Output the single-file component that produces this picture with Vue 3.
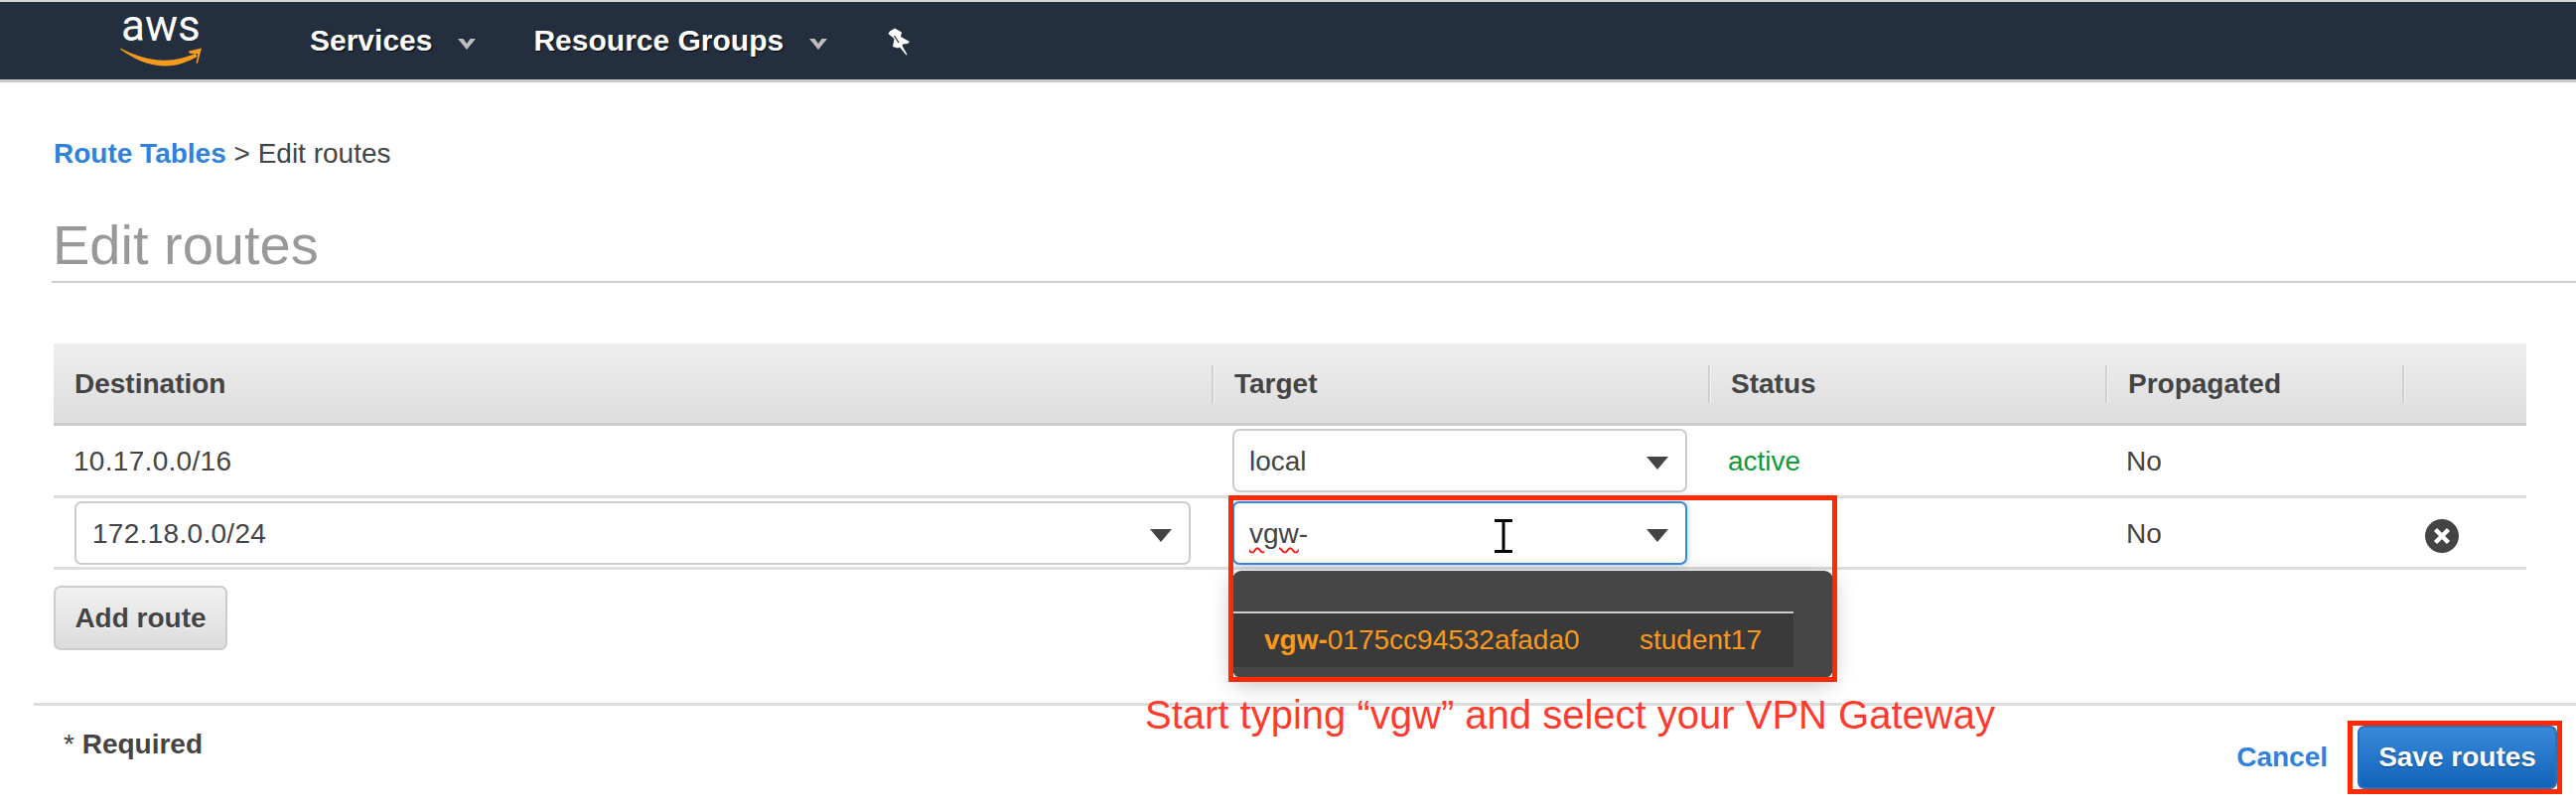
<script setup>
const heads = ['Destination', 'Target', 'Status', 'Propagated', '']
</script>

<template>
  <div class="page">
    <header class="nav">
      <div class="logo">
        <span class="aws">aws</span>
        <svg class="smile" viewBox="0 0 84 20" width="84" height="20">
          <path d="M1 1.500C14 11 29 18 45 18.500C58 18.800 69 14.500 78.500 9L77 5.800C67 10 57 12.800 45 12.700C30 12.500 15 8 1.600 0.500Z" fill="#f79a1c"/>
          <path d="M70 3.500L83 0.500L79 15.500C78 16 77.500 15.500 77.500 15C78.500 12 79 9 79 6C76 6.100 73 6.300 70.500 5.500Z" fill="#f79a1c"/>
        </svg>
      </div>
      <nav class="menu">
        <span class="item">Services<svg class="chev" viewBox="0 0 18 11" width="18" height="11"><path d="M0 0H5.500L9 5L12.500 0H18L9 11Z" fill="#bdbdbd"/></svg></span>
        <span class="item">Resource Groups<svg class="chev" viewBox="0 0 18 11" width="18" height="11"><path d="M0 0H5.500L9 5L12.500 0H18L9 11Z" fill="#bdbdbd"/></svg></span>
        <svg class="pin" viewBox="0 0 24 28" width="24" height="28">
          <path d="M7 0.500L14 4.500L13 9L22 14L20 16L15 16.500L14.500 18L19.500 27L18.500 27.500L12 19.500L10 20.500L5 19L6.500 11L0.500 6L2 3.500Z" fill="#fff"/>
          <path d="M6.500 8L11 15" stroke="#232f3e" stroke-width="1.300"/>
        </svg>
      </nav>
    </header>

    <section class="title">
      <div class="crumb"><a class="link">Route Tables</a> &gt; Edit routes</div>
      <h1 class="heading">Edit routes</h1>
    </section>

    <section class="table">
      <div class="thead">
        <div v-for="(h, i) in heads" :key="i" class="th" :class="{ 'th-first': i === 0 }">{{ h }}</div>
      </div>
      <div class="row row-one">
        <div class="cell first ip">10.17.0.0/16</div>
        <div class="cell">
          <div class="select target"><span>local</span><i class="caret"></i></div>
        </div>
        <div class="cell status"><span class="active">active</span></div>
        <div class="cell prop">No</div>
        <div class="cell"></div>
      </div>
      <div class="row row-two">
        <div class="cell">
          <div class="select dest"><span class="ip">172.18.0.0/24</span><i class="caret small"></i></div>
        </div>
        <div class="cell menu-anchor">
          <div class="select target focus">
            <span class="typed"><span class="wavy">vgw</span>-</span><i class="caret"></i>
            <svg class="ibeam" viewBox="0 0 20 34" width="20" height="34">
              <path d="M1 1.500H19M1 32.500H19M10 1.500V32.500" stroke="#000" stroke-width="3" fill="none"/>
            </svg>
          </div>
          <div class="dropdown">
            <div class="option">
              <span><b>vgw-</b>0175cc94532afada0</span><span class="owner">student17</span>
            </div>
          </div>
        </div>
        <div class="cell"></div>
        <div class="cell prop">No</div>
        <div class="cell remove">
          <svg viewBox="0 0 34 34" width="34" height="34">
            <circle cx="17" cy="17" r="17" fill="#444"/>
            <path d="M10.500 10.500L23.500 23.500M23.500 10.500L10.500 23.500" stroke="#fff" stroke-width="4.500"/>
          </svg>
        </div>
      </div>
      <button class="add">Add route</button>
    </section>

    <footer class="foot">
      <div class="req"><span class="star">*</span> Required</div>
      <div class="actions">
        <a class="link cancel">Cancel</a>
        <button class="save">Save routes</button>
      </div>
    </footer>

    <div class="red-box box-a"></div>
    <div class="red-box box-b"></div>
    <div class="note">Start typing “vgw” and select your VPN Gateway</div>
  </div>
</template>

<style>
html, body { margin: 0; background: #fff; overflow: hidden; }
</style>

<style scoped>
.page {
  position: relative;
  width: 2594px;
  height: 816px;
  overflow: hidden;
  font-family: "Liberation Sans", Arial, sans-serif;
  font-size: 28px;
  color: #444;
  background: #fff;
}
.nav {
  display: flex;
  align-items: center;
  box-sizing: border-box;
  height: 83px;
  background: #232f3e;
  border-top: 2px solid #d5d5d5;
  border-bottom: 3px solid #c9c9c9;
  padding-left: 120px;
}
.logo {
  position: relative;
  width: 84px;
  height: 78px;
}
.aws {
  position: absolute;
  left: 2px;
  top: -1px;
  font-family: Roboto, sans-serif;
  font-size: 44px;
  line-height: 50px;
  color: #fff;
}
.smile {
  position: absolute;
  left: 0;
  top: 46px;
}
.menu {
  display: flex;
  align-items: center;
  margin-left: 108px;
  height: 78px;
  color: #fff;
  font-size: 30px;
  font-weight: bold;
}
.item {
  display: flex;
  align-items: center;
  text-shadow: 1px 1px 1px #000;
  margin-right: 58px;
}
.chev { margin-left: 26px; margin-top: 6px; }
.pin { margin-left: 3px; margin-top: 2px; }
.title { padding-left: 52px; }
.crumb {
  margin-top: 55px;
  height: 34px;
  line-height: 34px;
  padding-left: 2px;
}
.link { color: #2f82dc; font-weight: bold; }
.heading {
  margin: 42px 0 0;
  height: 69px;
  line-height: 66px;
  font-size: 56px;
  font-weight: normal;
  color: #999;
  padding-left: 1px;
  border-bottom: 2px solid #ccc;
}
.table { margin: 61px 50px 0 54px; }
.thead, .row {
  display: grid;
  grid-template-columns: 1166px 500px 400px 299px 125px;
}
.thead {
  box-sizing: border-box;
  height: 83px;
  align-items: center;
  background: linear-gradient(#eeeeee, #dddddd);
  border-bottom: 3px solid #ccc;
}
.th {
  height: 38px;
  line-height: 38px;
  margin-top: 2px;
  padding-left: 21px;
  font-weight: bold;
  border-left: 2px solid #d0d0d0;
  box-shadow: inset 1px 0 0 #f4f4f4;
}
.th-first { border-left: 0; box-shadow: none; }
.row {
  align-items: center;
  border-bottom: 3px solid #ddd;
}
.row-one { height: 70px; }
.row-two { height: 69px; }
.first { padding-left: 20px; }
.ip { letter-spacing: .3px; }
.status { padding-left: 20px; }
.active { color: #0e9a3c; }
.prop { padding-left: 21px; }
.row-one .first, .row-one .status, .row-one .prop, .row-two .prop { padding-top: 2px; }
.remove { display: flex; padding-left: 23px; margin-top: 6px; }
.select {
  position: relative;
  display: flex;
  align-items: center;
  box-sizing: border-box;
  height: 64px;
  border: 2px solid #ccc;
  border-radius: 7px;
  background: #fff;
  padding-left: 15px;
  padding-top: 2px;
}
.target { width: 458px; margin-left: 21px; }
.dest { width: 1124px; margin-left: 21px; padding-left: 16px; }
.focus {
  border-color: #3d88dc;
  box-shadow: 0 0 6px rgba(61, 136, 220, .45);
}
.caret {
  position: absolute;
  right: 17px;
  top: 26px;
  border-style: solid;
  border-width: 13px 11px 0;
  border-color: #444 transparent transparent;
}
.caret.small { right: 17px; }
.wavy {
  text-decoration: underline wavy #f11;
  text-decoration-thickness: 2px;
  text-underline-offset: 4px;
}
.ibeam { position: absolute; left: 261px; top: 16px; }
.menu-anchor { position: relative; }
.dropdown {
  position: absolute;
  z-index: 2;
  left: 21px;
  top: 70px;
  box-sizing: border-box;
  width: 605px;
  height: 108px;
  padding-top: 41px;
  border-radius: 9px;
  background: #464646;
  box-shadow: 0 6px 22px rgba(0, 0, 0, .25);
}
.option {
  display: flex;
  justify-content: space-between;
  align-items: center;
  box-sizing: border-box;
  width: 565px;
  height: 56px;
  padding: 0 32px;
  background: #3a3a3a;
  border-top: 2px solid #ccc;
  color: #f8991d;
}
.add {
  display: block;
  box-sizing: border-box;
  width: 175px;
  height: 65px;
  margin-top: 16px;
  padding: 0;
  border: 2px solid #ccc;
  border-radius: 7px;
  background: linear-gradient(#f1f1f1, #dcdcdc);
  font: bold 28px "Liberation Sans", Arial, sans-serif;
  color: #444;
  text-shadow: 0 1px 0 #fff;
}
.foot {
  display: flex;
  justify-content: space-between;
  box-sizing: border-box;
  height: 108px;
  margin: 53px 0 0 34px;
  border-top: 3px solid #ddd;
  padding: 20px 19px 0 30px;
}
.req { font-weight: bold; margin-top: 2px; line-height: 34px; }
.star { font-weight: normal; }
.actions { display: flex; align-items: center; height: 64px; }
.cancel { margin-right: 30px; }
.save {
  box-sizing: border-box;
  width: 201px;
  height: 64px;
  padding: 0;
  border: 2px solid #2a70bb;
  border-radius: 7px;
  background: linear-gradient(#3a88da, #1164b9);
  font: bold 28px "Liberation Sans", Arial, sans-serif;
  color: #fff;
  text-shadow: 0 1px 1px #0a3f78;
}
.red-box {
  position: absolute;
  z-index: 3;
  box-sizing: border-box;
  border: 5px solid #ff2a00;
  pointer-events: none;
}
.box-a { left: 1237px; top: 499px; width: 613px; height: 188px; }
.box-b { left: 2364px; top: 726px; width: 216px; height: 74px; }
.note {
  position: absolute;
  z-index: 3;
  left: 1153px;
  top: 698px;
  font-size: 40px;
  line-height: 44px;
  white-space: nowrap;
  color: #ff3b30;
}
</style>
